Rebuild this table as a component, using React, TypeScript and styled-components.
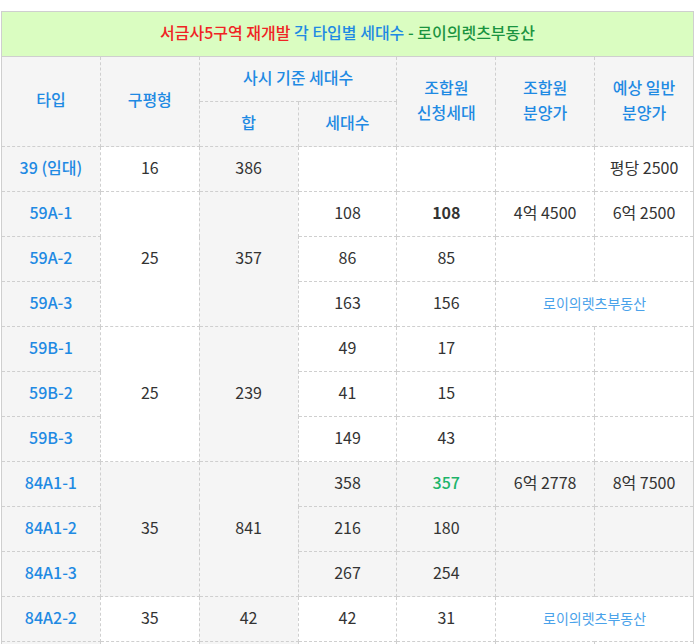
import React from 'react';
import styled, { createGlobalStyle, css } from 'styled-components';

const GlobalStyle = createGlobalStyle`
  body {
    margin: 0;
    background: #fff;
    font-family: 'Noto Sans CJK KR', 'Noto Sans', sans-serif;
  }
`;

const Wrapper = styled.div`
  padding: 11px 1px 0 1px;
`;

const Table = styled.table`
  width: 693px;
  border-collapse: collapse;
  table-layout: fixed;
  border: 1px solid #cfcfcf;
  font-size: 16px;
  color: #333;
`;

const Title = styled.th`
  height: 40px;
  padding: 0 0 4px;
  background: #dafdc1;
  border-bottom: 1px solid #cfcfcf;
  font-size: 16px;
  font-weight: 500;
  text-align: center;
`;

const Red = styled.span`
  color: #f02424;
`;
const Blue = styled.span`
  color: #1f8ae3;
`;
const Green = styled.span`
  color: #1a9440;
`;

const Head = styled.th`
  height: 40px;
  padding: 0 0 4px;
  background: #f5f5f5;
  border: 1px dashed #cfcfcf;
  color: #1f8ae3;
  font-weight: 500;
  line-height: 25px;
  text-align: center;
`;

const Cell = styled.td<{ $shade?: boolean; $type?: boolean; $bold?: boolean; $green?: boolean }>`
  height: 40px;
  padding: 0 0 4px;
  border: 1px dashed #cfcfcf;
  text-align: center;
  background: ${({ $shade }) => ($shade ? '#f5f5f5' : '#fff')};
  ${({ $type }) =>
    $type &&
    css`
      color: #1f8ae3;
      font-weight: 500;
    `}
  ${({ $bold }) => $bold && 'font-weight: 700;'}
  ${({ $green }) => $green && 'color: #1db46a; font-weight: 500;'}
`;

const Credit = styled.span`
  font-size: 14px;
  color: #4aa2ea;
`;

const Row = styled.tr``;

const App = () => {
  return (
    <Wrapper>
      <GlobalStyle />
      <Table>
        <thead>
          <Row>
            <Title colSpan={7}>
              <Red>서금사5구역 재개발</Red> <Blue>각 타입별 세대수</Blue> <Green>- 로이의렛츠부동산</Green>
            </Title>
          </Row>
          <Row>
            <Head rowSpan={2}>타입</Head>
            <Head rowSpan={2}>구평형</Head>
            <Head colSpan={2}>사시 기준 세대수</Head>
            <Head rowSpan={2}>
              조합원
              <br />
              신청세대
            </Head>
            <Head rowSpan={2}>
              조합원
              <br />
              분양가
            </Head>
            <Head rowSpan={2}>
              예상 일반
              <br />
              분양가
            </Head>
          </Row>
          <Row>
            <Head>합</Head>
            <Head>세대수</Head>
          </Row>
        </thead>
        <tbody>
          <Row>
            <Cell $shade $type>39 (임대)</Cell>
            <Cell>16</Cell>
            <Cell $shade>386</Cell>
            <Cell />
            <Cell />
            <Cell />
            <Cell>평당 2500</Cell>
          </Row>

          <Row>
            <Cell $shade $type>59A-1</Cell>
            <Cell rowSpan={3}>25</Cell>
            <Cell rowSpan={3} $shade>357</Cell>
            <Cell>108</Cell>
            <Cell $bold>108</Cell>
            <Cell>4억 4500</Cell>
            <Cell>6억 2500</Cell>
          </Row>
          <Row>
            <Cell $shade $type>59A-2</Cell>
            <Cell>86</Cell>
            <Cell>85</Cell>
            <Cell />
            <Cell />
          </Row>
          <Row>
            <Cell $shade $type>59A-3</Cell>
            <Cell>163</Cell>
            <Cell>156</Cell>
            <Cell colSpan={2}>
              <Credit>로이의렛츠부동산</Credit>
            </Cell>
          </Row>

          <Row>
            <Cell $shade $type>59B-1</Cell>
            <Cell rowSpan={3}>25</Cell>
            <Cell rowSpan={3} $shade>239</Cell>
            <Cell>49</Cell>
            <Cell>17</Cell>
            <Cell />
            <Cell />
          </Row>
          <Row>
            <Cell $shade $type>59B-2</Cell>
            <Cell>41</Cell>
            <Cell>15</Cell>
            <Cell />
            <Cell />
          </Row>
          <Row>
            <Cell $shade $type>59B-3</Cell>
            <Cell>149</Cell>
            <Cell>43</Cell>
            <Cell />
            <Cell />
          </Row>

          <Row>
            <Cell $shade $type>84A1-1</Cell>
            <Cell rowSpan={3} $shade>35</Cell>
            <Cell rowSpan={3} $shade>841</Cell>
            <Cell $shade>358</Cell>
            <Cell $shade $green>357</Cell>
            <Cell $shade>6억 2778</Cell>
            <Cell $shade>8억 7500</Cell>
          </Row>
          <Row>
            <Cell $shade $type>84A1-2</Cell>
            <Cell $shade>216</Cell>
            <Cell $shade>180</Cell>
            <Cell $shade />
            <Cell $shade />
          </Row>
          <Row>
            <Cell $shade $type>84A1-3</Cell>
            <Cell $shade>267</Cell>
            <Cell $shade>254</Cell>
            <Cell $shade />
            <Cell $shade />
          </Row>

          <Row>
            <Cell $shade $type>84A2-2</Cell>
            <Cell>35</Cell>
            <Cell $shade>42</Cell>
            <Cell>42</Cell>
            <Cell>31</Cell>
            <Cell colSpan={2}>
              <Credit>로이의렛츠부동산</Credit>
            </Cell>
          </Row>
          <Row>
            <Cell $shade $type />
            <Cell />
            <Cell $shade />
            <Cell />
            <Cell />
            <Cell />
            <Cell />
          </Row>
        </tbody>
      </Table>
    </Wrapper>
  );
};

export default App;
